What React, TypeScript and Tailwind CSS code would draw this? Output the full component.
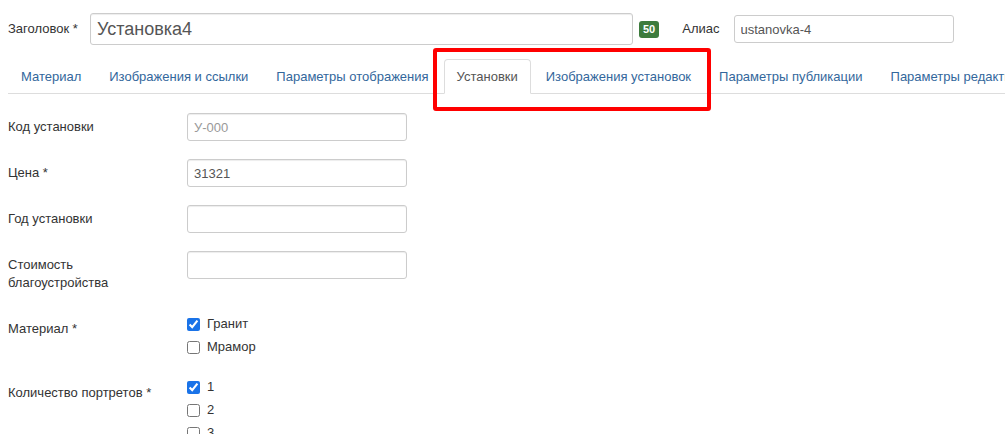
import React from 'react';

const tabs = [
  'Материал',
  'Изображения и ссылки',
  'Параметры отображения',
  'Установки',
  'Изображения установок',
  'Параметры публикации',
  'Параметры редактирования',
];

const inputCls =
  'w-[220px] h-[28px] px-[6px] border border-[#ccc] rounded-[3px] text-[13px] text-[#555] placeholder:text-[#999] shadow-[inset_0_1px_1px_rgba(0,0,0,0.075)] outline-none bg-white';

const Check = ({ label, checked }: { label: string; checked?: boolean }) => (
  <label className="flex items-center gap-[7px] leading-[18px] h-[18px] mb-[5px]">
    <input type="checkbox" defaultChecked={checked} className="m-0 w-[13px] h-[13px] accent-[#1a73e8]" />
    <span>{label}</span>
  </label>
);

export default function App() {
  return (
    <div className="relative w-[1005px] h-[434px] overflow-hidden bg-white text-[13px] text-[#333] font-['Liberation_Sans',Arial,sans-serif]">
      {/* Header */}
      <div className="flex items-center pl-2 pt-[13px]">
        <span className="w-[82px]">Заголовок *</span>
        <input
          defaultValue="Установка4"
          className="w-[543px] h-[32px] px-[6px] border border-[#ccc] rounded-[3px] text-[18px] text-[#555] shadow-[inset_0_1px_1px_rgba(0,0,0,0.075)] outline-none"
        />
        <span className="ml-[6px] h-[17px] px-[4px] rounded-[3px] bg-[#3d7b3d] text-white text-[11px] font-bold leading-[17px]">50</span>
        <span className="ml-[23px]">Алиас</span>
        <input defaultValue="ustanovka-4" className="ml-[14px] w-[220px] h-[28px] px-[6px] border border-[#ccc] rounded-[3px] text-[13px] text-[#555] outline-none" />
      </div>

      {/* Tabs */}
      <ul className="flex ml-2 mt-[14px] border-b border-[#ddd] whitespace-nowrap">
        {tabs.map((t) => {
          const active = t === 'Установки';
          return (
            <li key={t} className="mr-[2px] -mb-px">
              <span
                className={`flex items-center h-[35px] px-3 rounded-t-[4px] border ${
                  active ? 'bg-white border-[#ddd] border-b-white text-[#555]' : 'border-transparent text-[#33679c]'
                }`}
              >
                {t}
              </span>
            </li>
          );
        })}
      </ul>

      {/* Form */}
      <div className="pl-2 pt-[19px]">
        <div className="flex mb-[18px]">
          <div className="w-[179px] pt-[5px] leading-[18px]">Код установки</div>
          <input placeholder="У-000" className={inputCls} />
        </div>
        <div className="flex mb-[18px]">
          <div className="w-[179px] pt-[5px] leading-[18px]">Цена *</div>
          <input defaultValue="31321" className={inputCls} />
        </div>
        <div className="flex mb-[18px]">
          <div className="w-[179px] pt-[5px] leading-[18px]">Год установки</div>
          <input className={inputCls} />
        </div>
        <div className="flex mb-[23px]">
          <div className="w-[179px] pt-[5px] leading-[18px]">
            Стоимость
            <br />
            благоустройства
          </div>
          <input className={inputCls} />
        </div>
        <div className="flex mb-[17px]">
          <div className="w-[179px] pt-[5px] leading-[18px]">Материал *</div>
          <div>
            <Check label="Гранит" checked />
            <Check label="Мрамор" />
          </div>
        </div>
        <div className="flex">
          <div className="w-[179px] pt-[6px] leading-[18px]">Количество портретов *</div>
          <div>
            <Check label="1" checked />
            <Check label="2" />
            <Check label="3" />
          </div>
        </div>
      </div>

      {/* Highlight */}
      <div className="absolute left-[433px] top-[48px] w-[278px] h-[63px] border-4 border-[#f00] rounded-[3px] pointer-events-none" />
    </div>
  );
}
